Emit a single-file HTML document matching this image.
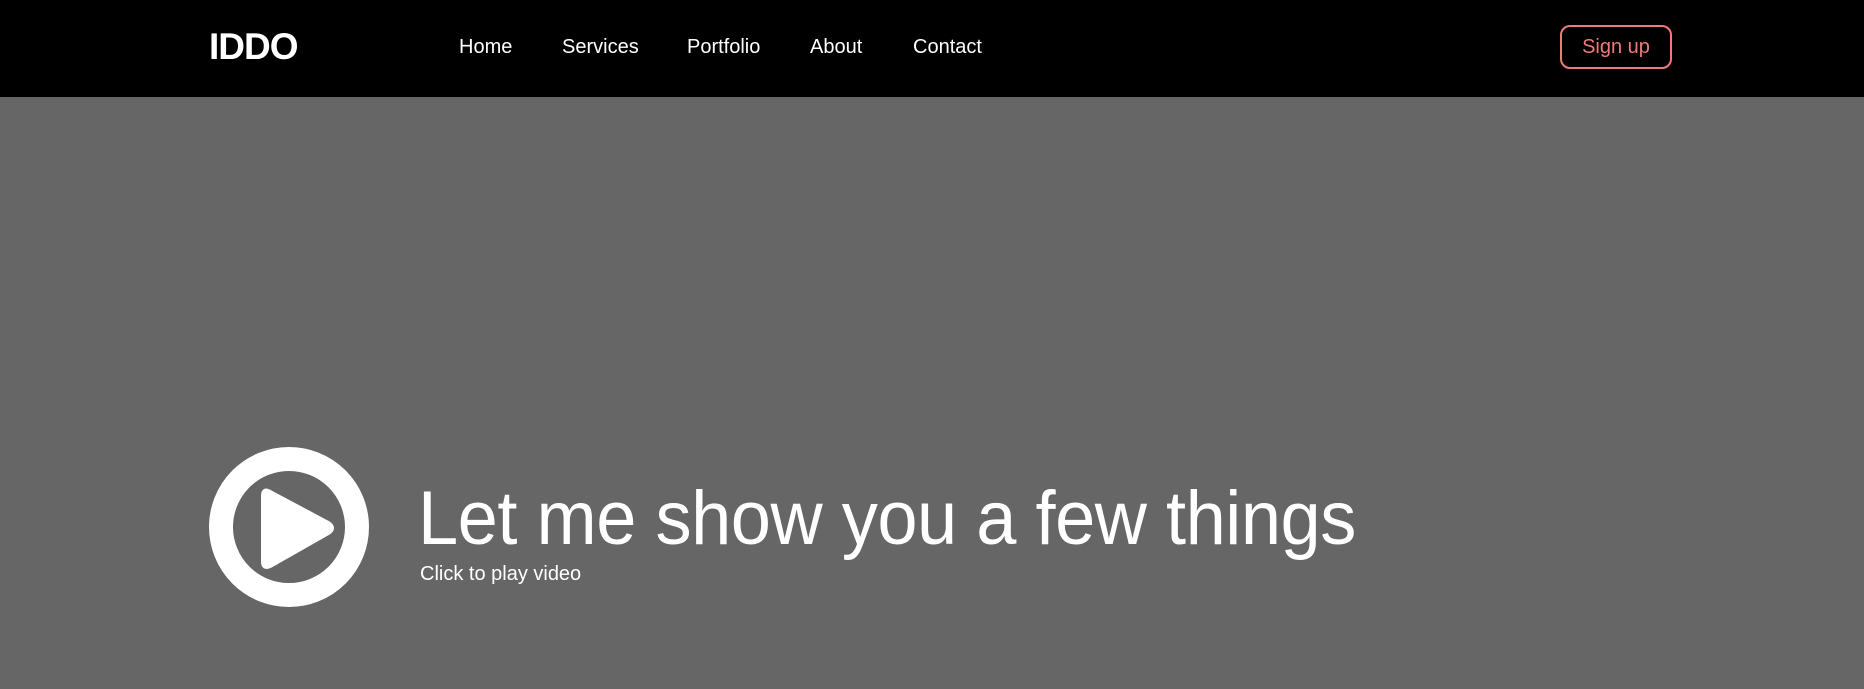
<!DOCTYPE html>
<html><head><meta charset="utf-8"><style>
*{margin:0;padding:0;box-sizing:border-box}
body{width:1864px;height:689px;background:#666;font-family:"Liberation Sans",sans-serif;overflow:hidden;position:relative}
.hdr{position:absolute;left:0;top:0;width:1864px;height:97px;background:#000}
.logo{position:absolute;left:209px;top:26px;font-size:37px;font-weight:bold;color:#fff;letter-spacing:-1px}
.nav a{position:absolute;top:36px;font-size:20px;color:#fff;text-decoration:none}
.btn{position:absolute;left:1560px;top:25px;width:112px;height:44px;border:2px solid #f07a7a;border-radius:10px;color:#f07a7a;font-size:20px;text-align:center;line-height:40px}
h1{position:absolute;left:418px;top:474px;font-size:76px;font-weight:300;color:#fff;white-space:nowrap;line-height:90px;letter-spacing:-0.5px;transform:scaleX(0.95);transform-origin:left}
.sub{position:absolute;left:420px;top:563px;font-size:20px;color:#fff}
</style></head><body>
<div class="hdr">
<div class="logo">IDDO</div>
<div class="nav">
<a style="left:459px">Home</a>
<a style="left:562px">Services</a>
<a style="left:687px">Portfolio</a>
<a style="left:810px">About</a>
<a style="left:913px">Contact</a>
</div>
<div class="btn">Sign up</div>
</div>
<svg style="position:absolute;left:0;top:0" width="1864" height="689">
<circle cx="289" cy="527" r="68" fill="none" stroke="#fff" stroke-width="24"/>
<path d="M268 492 Q264 490 264 496 L264 562 Q264 568 270 565 L328 532 Q334 528 328 524 Z" fill="#fff" stroke="#fff" stroke-width="6" stroke-linejoin="round"/>
</svg>
<h1>Let me show you a few things</h1>
<div class="sub">Click to play video</div>
</body></html>
